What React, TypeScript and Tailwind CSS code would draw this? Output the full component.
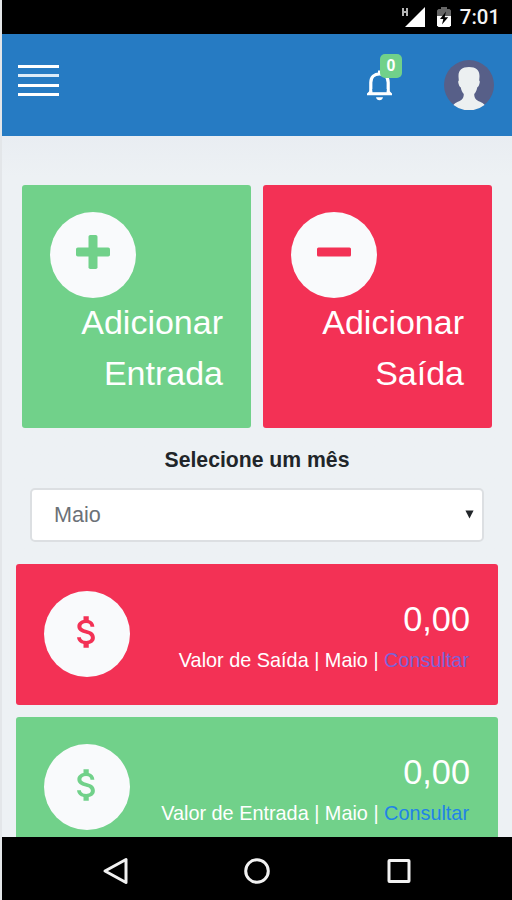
import { MdAttachMoney } from "react-icons/md";

const summaries = [
  { label: "Valor de Saída", amount: "0,00", month: "Maio", tone: "red" },
  { label: "Valor de Entrada", amount: "0,00", month: "Maio", tone: "green" },
];

export default function App() {
  return (
    <div className="flex h-[900px] w-[512px] overflow-hidden bg-[#e3e6e9] pl-[2px] font-['Liberation_Sans',Arial,sans-serif]">
      <div className="flex min-w-0 flex-1 flex-col">
        <StatusBar />
        <Header />
        <main className="min-h-0 flex-1 overflow-hidden bg-[#edf1f4] bg-linear-to-b from-[#e9edf2] to-[#edf1f4] to-[40px] pt-[48.5px]">
          <div className="flex gap-[12px] pl-[20px]">
            <button className="flex h-[243px] w-[229px] flex-col rounded-[3px] bg-[#71d18a] p-[28px] pt-[27.5px] text-right text-white">
              <Circle>
                <PlusIcon className="mb-[5px] size-[34px] text-[#71d18a]" />
              </Circle>
              <span className="-mt-[0.5px] w-full text-[34px] leading-[51px]">
                Adicionar Entrada
              </span>
            </button>
            <button className="flex h-[243px] w-[229px] flex-col rounded-[3px] bg-[#f33155] p-[28px] pt-[27.5px] text-right text-white">
              <Circle>
                <MinusIcon className="mb-[5px] size-[34px] text-[#f33155]" />
              </Circle>
              <span className="-mt-[0.5px] w-full text-[34px] leading-[51px]">
                Adicionar Saída
              </span>
            </button>
          </div>

          <div className="mt-[16.5px] pr-[28px] pl-[28px]">
            <label
              htmlFor="month"
              className="block text-center text-[21.2px] leading-[32px] font-bold text-[#212529]"
            >
              Selecione um mês
            </label>
            <div
              id="month"
              className="mt-[12px] flex h-[54px] items-center justify-between rounded-[5px] border-2 border-[#dcdfe2] bg-white pr-[8px] pl-[22px] text-[21.6px] text-[#6c7177]"
            >
              <span className="pt-[1px]">Maio</span>
              <svg viewBox="0 0 10 10" className="mb-[2px] size-[9px] text-[#212529]">
                <path d="M0.5 0.5h9L5 9.5z" fill="currentColor" />
              </svg>
            </div>
          </div>

          <div className="mt-[22px] flex flex-col gap-[12px] pr-[14px] pl-[14px]">
            {summaries.map((item) => (
              <SummaryCard key={item.label} {...item} />
            ))}
          </div>
        </main>
        <NavBar />
      </div>
    </div>
  );
}

function StatusBar() {
  return (
    <div className="flex h-[34px] shrink-0 items-center justify-end bg-black pr-[12px] text-[#f4f4f4]">
      <svg viewBox="0 0 24 20" className="mr-[12px] h-[20px] w-[24px]">
        <path d="M24 0v20H4z" fill="#fff" />
        <path
          d="M2 1v8M6 1v8M2 5h4"
          stroke="#b5b5b5"
          strokeWidth="2"
          fill="none"
        />
      </svg>
      <svg viewBox="0 0 14 20" className="mr-[9px] h-[20px] w-[14px]">
        <path d="M4 0h6v2h2.5L14 3.500V9H0V3.500L1.500 2H4z" fill="#666" />
        <path d="M0 9h14v9.500L12.500 20h-11L0 18.500z" fill="#fff" />
        <path d="M9 4.500L3 12h3.300L5 17.500l6.200-7.300H7.700z" fill="#000" />
      </svg>
      <span className="pt-[1px] font-['Roboto',sans-serif] text-[20.4px] leading-[33px] font-medium">
        7:01
      </span>
    </div>
  );
}

function Header() {
  return (
    <header className="flex h-[102px] shrink-0 items-start bg-[#267bc3] pr-[18px] pl-[16px]">
      <div className="mt-[31px] flex w-[41px] flex-col gap-[6.4px]">
        <span className="h-[3px] bg-white" />
        <span className="h-[3px] bg-[#dcebf8]" />
        <span className="h-[3px] bg-white" />
        <span className="h-[3px] bg-white" />
      </div>
      <div className="relative mt-[34px] ml-auto">
        <BellIcon className="h-[33px] w-[27px] text-white" />
        <span className="absolute -top-[14px] left-[14px] flex h-[24px] w-[22px] items-center justify-center rounded-[5px] bg-[#71d18a] text-[16px] font-bold text-white">
          0
        </span>
      </div>
      <Avatar className="mt-[26px] ml-[51px] size-[50px]" />
    </header>
  );
}

function SummaryCard({ label, amount, month, tone }: any) {
  const red = tone === "red";
  return (
    <section
      className={`flex h-[141px] shrink-0 items-start justify-between rounded-[3px] p-[28px] pt-[27px] text-white ${
        red ? "bg-[#f33155]" : "bg-[#71d18a]"
      }`}
    >
      <Circle>
        <MdAttachMoney
          className={`mb-[3px] size-[42px] ${
            red ? "text-[#f33155]" : "text-[#71d18a]"
          }`}
        />
      </Circle>
      <div className="mt-[3px] text-right whitespace-nowrap">
        <h3 className="text-[34.300px] leading-[51px]">{amount}</h3>
        <p className="pr-[1px] text-[19.850px] leading-[30px]">
          {label} | {month} |{" "}
          <a className={red ? "text-[#7b62d8]" : "text-[#2183e8]"}>Consultar</a>
        </p>
      </div>
    </section>
  );
}

function Circle({ children }: any) {
  return (
    <span className="flex size-[85.5px] shrink-0 items-center justify-center rounded-full bg-[#f9fafc]">
      {children}
    </span>
  );
}

function NavBar() {
  return (
    <nav className="flex h-[63px] shrink-0 items-center bg-black pt-[5px] pl-[100px] text-[#f2f2f2]">
      <svg viewBox="0 0 26 28" className="h-[28px] w-[26px]" fill="none">
        <path
          d="M24 2.500v23L3 14z"
          stroke="currentColor"
          strokeWidth="3"
          strokeLinejoin="round"
        />
      </svg>
      <svg viewBox="0 0 28 28" className="ml-[115px] size-[28px]" fill="none">
        <circle cx="14" cy="14" r="11.300" stroke="currentColor" strokeWidth="3" />
      </svg>
      <svg viewBox="0 0 24 26" className="ml-[116px] h-[26px] w-[24px]" fill="none">
        <rect
          x="2"
          y="2.500"
          width="20"
          height="21"
          rx="0.500"
          stroke="currentColor"
          strokeWidth="3"
          strokeLinejoin="round"
        />
      </svg>
    </nav>
  );
}

function BellIcon(props: any) {
  return (
    <svg {...props} viewBox="0 0 27 33" fill="none">
      <path
        d="M4.800 26V14.500C4.800 9 8.500 5.800 13.500 5.800s8.700 3.200 8.700 8.700V26"
        stroke="currentColor"
        strokeWidth="3.200"
      />
      <path
        d="M1 25.600L4 22.500h19l3 3.100v1.600H1z M10 29.200h7c-.4 2-1.600 3-3.500 3s-3.100-1-3.500-3z"
        fill="currentColor"
      />
      <path d="M6.400 21h14.200v3.200H6.400z" fill="#267bc3" />
      <path d="M12 2.500h3V6h-3z" fill="currentColor" />
    </svg>
  );
}

function Avatar(props: any) {
  return (
    <svg {...props} viewBox="0 0 50 50">
      <circle cx="25" cy="25" r="25" fill="#575f88" />
      <path
        d="M25 7c-7 0-10.700 3-10.500 9.500l.3 4c-.8.300-.8 2 0 4 .5 1.800 1.300 2.500 2 3 .5 3 1.500 5 3 6.500 0 6-3.500 6.500-7.300 8.500-1.500.7-2.500 1.500-3 2.500A25 25 0 0 0 40.500 45c-.5-1-1.500-1.800-3-2.500-3.800-2-7.300-2.500-7.300-8.500 1.500-1.500 2.500-3.500 3-6.500.7-.5 1.500-1.200 2-3 .8-2 .8-3.700 0-4l.3-4C35.700 10 32 7 25 7z"
        fill="#ecf0f1"
      />
    </svg>
  );
}

function PlusIcon(props: any) {
  return (
    <svg {...props} viewBox="0 0 34 34" fill="currentColor">
      <rect x="0" y="12.500" width="34" height="9" rx="1.800" />
      <rect x="12.500" y="0" width="9" height="34" rx="1.800" />
    </svg>
  );
}

function MinusIcon(props: any) {
  return (
    <svg {...props} viewBox="0 0 34 34" fill="currentColor">
      <rect x="0" y="12.500" width="34" height="9" rx="1.500" />
    </svg>
  );
}
